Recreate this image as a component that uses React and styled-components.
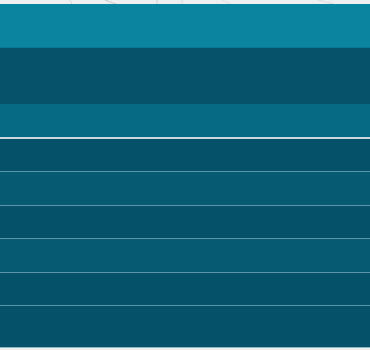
import React from "react";
import styled, { createGlobalStyle } from "styled-components";

const Global = createGlobalStyle`
  html, body { margin: 0; padding: 0; background: #eeefee; font-family: "Liberation Sans", Arial, sans-serif; }
  #root { width: 370px; height: 350px; overflow: hidden; }
`;

const Page = styled.div`
  display: flex;
  flex-direction: column;
  width: 370px;
  height: 350px;
  background: #eeefee;
`;

const TopStrip = styled.div`
  height: 4px;
  flex: none;
  background: #efefef;
  overflow: hidden;
  svg { display: block; }
`;

const Header = styled.header`
  height: 44px;
  flex: none;
  background: #0b84a0;
  border-bottom: 1px solid #0a7893;
  box-sizing: border-box;
`;

const SubBar = styled.div`
  height: 56px;
  flex: none;
  background: #05526a;
`;

const TabBar = styled.nav`
  height: 35px;
  flex: none;
  box-sizing: border-box;
  background: #076a84;
  border-bottom: 2px solid #c9dadf;
`;

const List = styled.div`
  display: flex;
  flex-direction: column;
`;

const Row = styled.div`
  height: ${(p) => p.$h}px;
  flex: none;
  box-sizing: border-box;
  background: ${(p) => (p.$alt ? "#065b73" : "#05516a")};
  border-bottom: ${(p) => (p.$last ? "1px solid #8fb7c1" : "1px solid #5b95a5")};
`;

const rows = [
  { h: 33, alt: false },
  { h: 34, alt: true },
  { h: 33, alt: false },
  { h: 34, alt: true },
  { h: 33, alt: false },
  { h: 42, alt: false, last: true },
];

export default function App() {
  return (
    <>
      <Global />
      <Page>
        <TopStrip>
          <svg width="370" height="4" viewBox="0 0 370 4">
            <path d="M70 0 L72 4" stroke="#d4d4d4" strokeWidth="1" />
            <path d="M105 0 Q 110 2 116 4" stroke="#c8c8c8" strokeWidth="1" fill="none" />
            <path d="M157 0 L157 4" stroke="#cfcfcf" strokeWidth="1" />
            <path d="M182 0 L182 4" stroke="#d6d6d6" strokeWidth="1" />
            <path d="M222 0 Q 226 2 230 4" stroke="#dcdcdc" strokeWidth="1" fill="none" />
            <path d="M318 0 Q 326 2 334 4" stroke="#dadada" strokeWidth="1" fill="none" />
          </svg>
        </TopStrip>
        <Header />
        <SubBar />
        <TabBar />
        <List>
          {rows.map((r, i) => (
            <Row key={i} $h={r.h} $alt={r.alt} $last={r.last} />
          ))}
        </List>
      </Page>
    </>
  );
}
